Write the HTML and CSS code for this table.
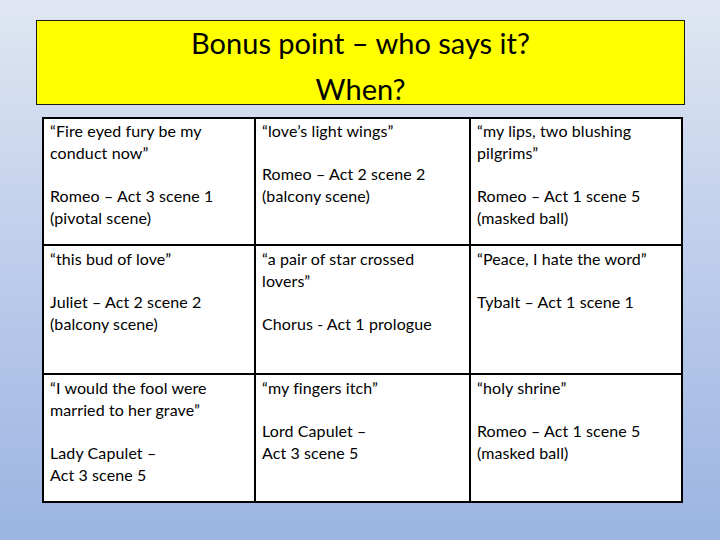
FILE: index.html
```html
<!DOCTYPE html>
<html>
<head>
<meta charset="utf-8">
<link rel="stylesheet" href="styles.css">
</head>
<body>
<div class="slide">
  <div class="title">
    <div>Bonus point – who says it?</div>
    <div>When?</div>
  </div>
  <div class="grid">
    <div class="cell"><p class="q">“Fire eyed fury be my conduct now”</p><p>Romeo – Act 3 scene 1 (pivotal scene)</p></div>
    <div class="cell"><p class="q">“love’s light wings”</p><p>Romeo – Act 2 scene 2 (balcony scene)</p></div>
    <div class="cell"><p class="q">“my lips, two blushing pilgrims”</p><p>Romeo – Act 1 scene 5 (masked ball)</p></div>
    <div class="cell"><p class="q">“this bud of love”</p><p>Juliet – Act 2 scene 2 (balcony scene)</p></div>
    <div class="cell"><p class="q">“a pair of star crossed lovers”</p><p>Chorus - Act 1 prologue</p></div>
    <div class="cell"><p class="q">“Peace, I hate the word”</p><p>Tybalt – Act 1 scene 1</p></div>
    <div class="cell"><p class="q">“I would the fool were married to her grave”</p><p>Lady Capulet –<br>Act 3 scene 5</p></div>
    <div class="cell"><p class="q">“my fingers itch”</p><p>Lord Capulet –<br>Act 3 scene 5</p></div>
    <div class="cell"><p class="q">“holy shrine”</p><p>Romeo – Act 1 scene 5 (masked ball)</p></div>
  </div>
</div>
</body>
</html>
```
FILE: styles.css
```css
html, body {
  margin: 0;
  padding: 0;
}
body {
  width: 720px;
  height: 540px;
  overflow: hidden;
  background: linear-gradient(to bottom, #e0e7f2 0%, #c3d1ec 40%, #9bb4e2 100%);
  font-family: Lato, "Open Sans", sans-serif;
  color: #000;
}
.slide {
  display: flex;
  flex-direction: column;
  padding-top: 20px;
}
.title {
  margin-left: 36px;
  width: 647px;
  height: 83px;
  border: 1px solid #1a1a1a;
  background: #ffff00;
  text-align: center;
  font-size: 29px;
  line-height: 45px;
  display: flex;
  flex-direction: column;
  align-items: center;
}
.title div:first-child {
  margin-top: -1px;
}
.title div + div {
  margin-top: 1px;
}
.grid {
  margin-top: 12px;
  margin-left: 42px;
  width: 637px;
  padding: 2px;
  gap: 2px;
  background: #000;
  display: grid;
  grid-template-columns: 210px 213px 210px;
  grid-template-rows: 125px 127px 126px;
}
.cell {
  background: #fff;
  padding: 1px 6px 0 6px;
  font-size: 16px;
  line-height: 21.7px;
  letter-spacing: 0.1px;
}
.cell:nth-child(n+4) {
  padding-top: 2px;
}
.cell p {
  margin: 0;
}
.cell p.q {
  margin-bottom: 21.7px;
}
```
